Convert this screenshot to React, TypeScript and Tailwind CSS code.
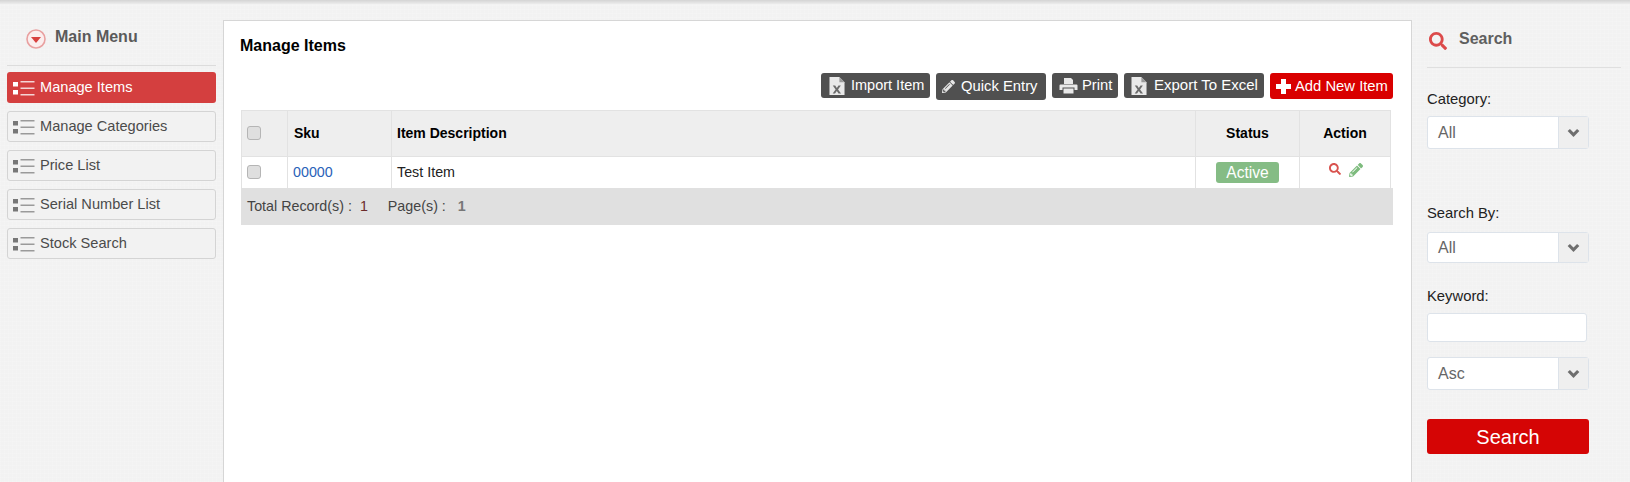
import React from "react";
import { FaPencilAlt, FaSearch } from "react-icons/fa";

const FONT = "font-['Liberation_Sans',Arial,sans-serif]";

function ListIcon({ color, small }: { color: string; small: string }) {
  return (
    <svg width="22" height="16" viewBox="0 0 22 16" className="shrink-0">
      <rect x="0" y="2" width="5" height="4.5" fill={small} />
      <rect x="0" y="10" width="5" height="4.5" fill={small} />
      <rect x="7.5" y="1" width="14" height="1.5" fill={color} />
      <rect x="7.5" y="7.5" width="14" height="1.5" fill={color} />
      <rect x="7.5" y="14" width="14" height="1.5" fill={color} />
    </svg>
  );
}

function MenuItem({ label, active }: { label: string; active?: boolean }) {
  return (
    <div
      className={
        active
          ? "h-[31px] flex items-center pl-[6px] gap-[5px] rounded-[3px] bg-[#d43f3f] text-white text-[14.6px]"
          : "h-[31px] flex items-center pl-[5px] gap-[5px] rounded-[3px] bg-[#f2f2f2] border border-[#d4d4d4] text-[#4b4b4b] text-[14.6px]"
      }
    >
      <ListIcon
        color={active ? "#f4d4d4" : "#9a9a9a"}
        small={active ? "#ffffff" : "#777777"}
      />
      <span>{label}</span>
    </div>
  );
}

function XlsIcon() {
  return (
    <svg width="16" height="20" viewBox="0 0 17 20" className="shrink-0">
      <path d="M0.5 0.5H11L16.5 6V19.5H0.5Z" fill="#e9e9e9" />
      <path d="M11 0.5V6H16.5Z" fill="#9b9b9b" />
      <path d="M4 9.5h2.6l1.7 2.7 1.8-2.7h2.5l-3 4.2 3.2 4.3h-2.7l-1.8-2.8-1.9 2.8H3.9l3.1-4.3z" fill="#6b6b6b" />
    </svg>
  );
}

function PrintIcon() {
  return (
    <svg width="19" height="18" viewBox="0 0 19 18" className="shrink-0">
      <path d="M5 1h7l2 2v4H5z" fill="#e9e9e9" />
      <path d="M1.5 7.5h16a1 1 0 0 1 1 1V13h-3v-2.5h-12V13h-3V8.5a1 1 0 0 1 1-1z" fill="#e9e9e9" />
      <path d="M4.5 11.5h10V16.5h-10z" fill="#e9e9e9" />
    </svg>
  );
}

function Btn({
  children,
  className,
}: {
  children: React.ReactNode;
  className: string;
}) {
  return (
    <div
      className={
        "flex items-center rounded-[3px] bg-[#505050] text-white text-[14.8px] " +
        className
      }
    >
      {children}
    </div>
  );
}

function SelectBox({ value, h }: { value: string; h: string }) {
  return (
    <div
      className={
        "flex w-[162px] bg-white border border-[#dde3ea] rounded-[3px] text-[#666] text-[16px] " +
        h
      }
    >
      <div className="flex-1 flex items-center pl-[10px]">{value}</div>
      <div className="w-[30px] bg-[#efefef] border-l border-[#dde3ea] flex items-center justify-center">
        <svg width="13" height="10" viewBox="0 0 13 10">
          <path d="M1.8 2l4.7 4.8L11.2 2" fill="none" stroke="#6e6e6e" strokeWidth="3.2" />
        </svg>
      </div>
    </div>
  );
}

export default function App() {
  return (
    <div
      className={
        FONT +
        " relative w-[1630px] h-[482px] overflow-hidden flex bg-[#f2f2f2] bg-[repeating-linear-gradient(0deg,rgba(255,255,255,0.12)_0px,rgba(255,255,255,0.12)_1px,transparent_1px,transparent_4px),repeating-linear-gradient(90deg,rgba(255,255,255,0.12)_0px,rgba(255,255,255,0.12)_1px,transparent_1px,transparent_4px)]"
      }
    >
      <div className="absolute top-0 left-0 right-0 h-[4px] bg-gradient-to-b from-[#d4d4d4] to-[#ececec]" />

      {/* Left sidebar */}
      <aside className="w-[223px] shrink-0 pl-[7px] pr-[7px] pt-[26px]">
        <div className="h-[40px] border-b border-[#dcdcdc] flex items-start pl-[18px] box-border">
          <svg width="22" height="22" viewBox="0 0 22 22" className="mt-[2px]">
            <circle cx="11" cy="11" r="9" fill="#fbeeee" stroke="#e9a0a0" strokeWidth="1.6" />
            <path d="M6 9h10l-5 6z" fill="#d8413f" />
          </svg>
          <span className="ml-[8px] text-[16px] leading-[22px] font-bold text-[#5a5a5a]">
            Main Menu
          </span>
        </div>
        <nav className="mt-[6px] flex flex-col gap-[8px]">
          <MenuItem label="Manage Items" active />
          <MenuItem label="Manage Categories" />
          <MenuItem label="Price List" />
          <MenuItem label="Serial Number List" />
          <MenuItem label="Stock Search" />
        </nav>
      </aside>

      {/* Main panel */}
      <main className="w-[1189px] h-[482px] shrink-0 mt-[20px] bg-white border border-[#d6d6d6] pl-[17px] pr-[18px]">
        <h1 className="text-[16px] font-bold text-black leading-[16px] mt-[17px] -ml-[1px]">
          Manage Items
        </h1>
        <div className="flex justify-end items-start gap-[6px] mt-[19px] h-[37px]">
          <Btn className="h-[25px] w-[109px] pl-[8px]">
            <XlsIcon />
            <span className="ml-[6px] text-[14.5px]">Import Item</span>
          </Btn>
          <Btn className="h-[27px] w-[110px] pl-[6px]">
            <FaPencilAlt className="w-[13px] h-[13px] text-[#e5e5e5]" />
            <span className="ml-[6px]">Quick Entry</span>
          </Btn>
          <Btn className="h-[25px] w-[66px] pl-[7px]">
            <PrintIcon />
            <span className="ml-[4px]">Print</span>
          </Btn>
          <Btn className="h-[25px] w-[140px] pl-[7px]">
            <XlsIcon />
            <span className="ml-[7px] text-[15px]">Export To Excel</span>
          </Btn>
          <div className="h-[26px] w-[123px] flex items-center pl-[6px] rounded-[3px] bg-[#d90000] text-white text-[14.8px]">
            <svg width="15" height="15" viewBox="0 0 15 15" className="shrink-0">
              <path d="M5 0h5v5h5v5h-5v5H5v-5H0V5h5z" fill="#fff" />
            </svg>
            <span className="ml-[4px]">Add New Item</span>
          </div>
        </div>

        <div className="w-[1152px] text-[14.3px]">
          <div className="w-[1150px] border-l border-r border-t border-[#e2e2e2]">
            <div className="flex h-[46px] bg-[#eeeeee] border-b border-[#e2e2e2] font-bold text-black text-[14px]">
              <div className="w-[46px] border-r border-[#e2e2e2] flex items-center pl-[5px]">
                <div className="w-[14px] h-[14px] -mt-[2px] rounded-[3px] bg-[#dfdfdf] border border-[#b5b5b5]" />
              </div>
              <div className="w-[104px] border-r border-[#e2e2e2] flex items-center pl-[6px]">Sku</div>
              <div className="w-[804px] border-r border-[#e2e2e2] flex items-center pl-[5px]">Item Description</div>
              <div className="w-[104px] border-r border-[#e2e2e2] flex items-center justify-center">Status</div>
              <div className="flex-1 flex items-center justify-center">Action</div>
            </div>
            <div className="flex h-[31px] bg-white text-[#222]">
              <div className="w-[46px] border-r border-[#e2e2e2] flex items-center pl-[5px]">
                <div className="w-[14px] h-[14px] -mt-[2px] rounded-[3px] bg-[#dfdfdf] border border-[#b5b5b5]" />
              </div>
              <div className="w-[104px] border-r border-[#e2e2e2] flex items-center pl-[5px] text-[#2a62b8]">00000</div>
              <div className="w-[804px] border-r border-[#e2e2e2] flex items-center pl-[5px]">Test Item</div>
              <div className="w-[104px] border-r border-[#e2e2e2] flex items-center justify-center">
                <span className="w-[63px] h-[21px] rounded-[3px] bg-[#85bc85] text-white text-[15.6px] flex items-center justify-center">
                  Active
                </span>
              </div>
              <div className="flex-1 flex items-start justify-center gap-[8px] pt-[6px] pl-[1px]">
                <FaSearch className="w-[12px] h-[12px] text-[#d9534f]" />
                <FaPencilAlt className="w-[14px] h-[14px] text-[#7dbb7d]" />
              </div>
            </div>
          </div>
          <div className="h-[37px] bg-[#e0e0e0] flex items-center pl-[6px] text-[#444]">
            <span>Total Record(s) :</span>
            <span className="ml-[8px] text-[#6b2a2a]">1</span>
            <span className="ml-[20px]">Page(s) :</span>
            <span className="ml-[12px] font-bold text-[#777]">1</span>
          </div>
        </div>
      </main>

      {/* Right sidebar */}
      <aside className="flex-1 pl-[15px] pr-[9px] pt-[27px]">
        <div className="h-[41px] border-b border-[#dfdfdf] flex items-start box-border">
          <FaSearch className="w-[18px] h-[18px] text-[#dc4a4a] mt-[5px] ml-[2px]" />
          <span className="ml-[12px] text-[16px] font-bold text-[#5f5f5f] leading-[20px] mt-[2px]">Search</span>
        </div>
        <label className="block mt-[23px] text-[14.8px] leading-[17px] text-[#222]">Category:</label>
        <div className="mt-[8px]">
          <SelectBox value="All" h="h-[33px]" />
        </div>
        <label className="block mt-[56px] text-[14.8px] leading-[17px] text-[#222]">Search By:</label>
        <div className="mt-[10px]">
          <SelectBox value="All" h="h-[31px]" />
        </div>
        <label className="block mt-[25px] text-[14.8px] leading-[17px] text-[#222]">Keyword:</label>
        <div className="mt-[8px] w-[160px] h-[29px] bg-white border border-[#dde3ea] rounded-[3px]" />
        <div className="mt-[15px]">
          <SelectBox value="Asc" h="h-[33px]" />
        </div>
        <div className="mt-[29px] w-[162px] h-[35px] rounded-[3px] bg-[#d50505] text-white text-[20px] flex items-center justify-center">
          Search
        </div>
      </aside>
    </div>
  );
}
